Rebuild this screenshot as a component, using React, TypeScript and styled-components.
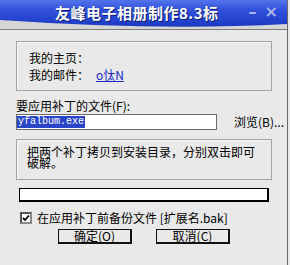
import React from "react";
import styled, { createGlobalStyle } from "styled-components";

const Global = createGlobalStyle`
  html, body { margin: 0; padding: 0; background: #e9e9e9; }
  body { font-family: "Noto Sans CJK SC", "Liberation Sans", sans-serif; font-size: 12px; color: #000; }
`;

const Window = styled.div`
  width: 287px;
  height: 265px;
  background: #e9e9e9;
  border-right: 1px solid #6a6a6a;
  display: flex;
  flex-direction: column;
  overflow: hidden;
`;

const TitleBar = styled.div`
  height: 30px;
  background: #d6d6d6;
  border-bottom: 1px solid #7c7c7c;
  box-sizing: border-box;
`;

const TitleBlue = styled.div`
  height: 28px;
  display: flex;
  align-items: flex-start;
  padding-top: 3px;
  box-sizing: border-box;
  background: linear-gradient(180deg, #5474ec 0%, #3151dc 35%, #2444d0 70%, #1a36bd 100%);
  clip-path: path("M0 0 H288 V24 Q160 31 0 20 Z");
`;

const Title = styled.div`
  margin-left: 55px;
  font-size: 15px;
  font-weight: bold;
  line-height: 20px;
  color: #fff;
  letter-spacing: 0.5px;
  text-shadow: 1px 1px 0 #0c1a70;
`;

const Controls = styled.div`
  margin-left: auto;
  margin-right: 9px;
  display: flex;
  gap: 8px;
  color: #a9b9ec;
  font-family: "DejaVu Sans", sans-serif;
  font-size: 16px;
  font-weight: bold;
  line-height: 18px;
`;

const Body = styled.div`
  padding: 11px 16px 0 16px;
  display: flex;
  flex-direction: column;
`;

const GroupBox = styled.div<{ $h: number }>`
  width: 256px;
  height: ${(p) => p.$h}px;
  box-sizing: border-box;
  border: 1px solid #a3a3a3;
  box-shadow: inset 1px 1px 0 #f6f6f6;
  flex-shrink: 0;
`;

const InfoBox = styled(GroupBox)`
  padding: 7px 0 0 12px;
`;

const InfoRow = styled.div`
  height: 17px;
  line-height: 17px;
  display: flex;
  white-space: nowrap;
`;

const Link = styled.span`
  margin-left: 7px;
  color: #1626c8;
  text-decoration: underline;
`;

const Label = styled.div`
  margin-top: 9px;
  line-height: 12px;
  height: 12px;
  white-space: nowrap;
`;

const FileRow = styled.div`
  margin-top: 2px;
  display: flex;
  align-items: center;
`;

const Input = styled.div`
  width: 201px;
  height: 16px;
  flex-shrink: 0;
  box-sizing: border-box;
  background: #fff;
  border: 1px solid #6c6c6c;
  padding: 1px 0 0 0;
  display: flex;
`;

const Selected = styled.span`
  background: #2a46c8;
  color: #fff;
  font-family: "Liberation Mono", monospace;
  font-size: 10px;
  line-height: 12px;
  height: 12px;
  padding: 0 1px 0 1px;
`;

const Browse = styled.div`
  margin-left: 17px;
  flex-shrink: 0;
  white-space: nowrap;
  line-height: 14px;
`;

const NoteBox = styled(GroupBox)`
  margin-top: 9px;
  padding: 6px 0 0 10px;
`;

const NoteText = styled.div`
  width: 232px;
  line-height: 11px;
`;

const Progress = styled.div`
  margin: 8px 0 0 3px;
  width: 250px;
  height: 14px;
  flex-shrink: 0;
  box-sizing: border-box;
  background: #fff;
  border: 2px solid #000;
  border-top-width: 1px;
  border-left-width: 1px;
`;

const CheckRow = styled.label`
  margin: 10px 0 0 4px;
  display: flex;
  align-items: center;
  gap: 5px;
  white-space: nowrap;
  height: 12px;
  line-height: 12px;
`;

const Box = styled.span`
  width: 12px;
  height: 12px;
  box-sizing: border-box;
  border: 2px solid #555;
  border-right-color: #8a8a8a;
  border-bottom-color: #8a8a8a;
  background: #fff;
  display: flex;
  align-items: center;
  justify-content: center;
`;

const Buttons = styled.div`
  margin: 5px 0 0 42px;
  display: flex;
  gap: 24px;
`;

const Button = styled.div`
  width: 74px;
  height: 15px;
  box-sizing: border-box;
  border: 1px solid #111;
  border-right-width: 2px;
  border-bottom-width: 2px;
  display: flex;
  align-items: center;
  justify-content: center;
  line-height: 12px;
  white-space: nowrap;
`;

export default function App() {
  return (
    <>
      <Global />
      <Window>
        <TitleBar>
          <TitleBlue>
            <Title>友峰电子相册制作8.3标</Title>
            <Controls>
              <span>–</span>
              <span>×</span>
            </Controls>
          </TitleBlue>
        </TitleBar>
        <Body>
          <InfoBox $h={50}>
            <InfoRow>我的主页：</InfoRow>
            <InfoRow>
              我的邮件：<Link>o忲N</Link>
            </InfoRow>
          </InfoBox>
          <Label>要应用补丁的文件(F):</Label>
          <FileRow>
            <Input>
              <Selected>yfalbum.exe</Selected>
            </Input>
            <Browse>浏览(B)...</Browse>
          </FileRow>
          <NoteBox $h={41}>
            <NoteText>把两个补丁拷贝到安装目录，分别双击即可破解。</NoteText>
          </NoteBox>
          <Progress />
          <CheckRow>
            <Box>
              <svg width="8" height="8" viewBox="0 0 8 8">
                <path d="M1 4 L3 6 L7 1.5" fill="none" stroke="#000" strokeWidth="1.8" />
              </svg>
            </Box>
            在应用补丁前备份文件 [扩展名.bak]
          </CheckRow>
          <Buttons>
            <Button>确定(O)</Button>
            <Button>取消(C)</Button>
          </Buttons>
        </Body>
      </Window>
    </>
  );
}
